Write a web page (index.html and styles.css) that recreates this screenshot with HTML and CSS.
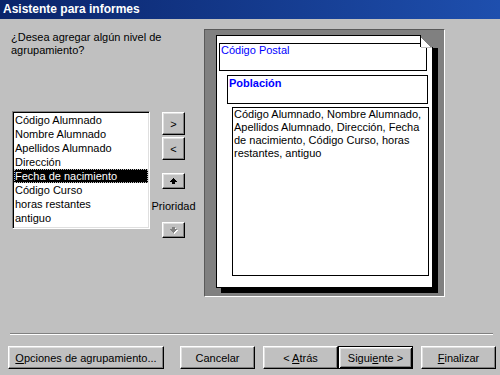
FILE: index.html
```html
<!DOCTYPE html>
<html lang="es">
<head>
  <meta charset="UTF-8">
  <title>Asistente para informes</title>
  <link rel="stylesheet" href="styles.css">
</head>
<body>

  <div class="wizard">
    <div class="titlebar">Asistente para informes</div>

    <div class="main">
      <div class="left">
        <p class="question">¿Desea agregar algún nivel de<br>agrupamiento?</p>

        <div class="picker">
          <ul class="listbox">
            <li>Código Alumnado</li>
            <li>Nombre Alumnado</li>
            <li>Apellidos Alumnado</li>
            <li>Dirección</li>
            <li class="selected">Fecha de nacimiento</li>
            <li>Código Curso</li>
            <li>horas restantes</li>
            <li>antiguo</li>
          </ul>

          <div class="move-buttons">
            <button class="btn small">&gt;</button>
            <button class="btn small">&lt;</button>
            <button class="btn arrow up">
              <svg width="7" height="6" viewBox="0 0 7 6" shape-rendering="crispEdges">
                <path d="M3 0h1v1h1v1h1v1h1v1H5v2H2V4H0V3h1V2h1V1h1z" fill="#000"/>
              </svg>
            </button>
            <span class="priority">Prioridad</span>
            <button class="btn arrow down" disabled>
              <svg width="8" height="7" viewBox="0 0 8 7" shape-rendering="crispEdges">
                <path transform="translate(1 1)" d="M2 0h3v2h2v1H6v1H5v1H4v1H3V5H2V4H1V3H0V2h2z" fill="#fff"/>
                <path d="M2 0h3v2h2v1H6v1H5v1H4v1H3V5H2V4H1V3H0V2h2z" fill="#808080"/>
              </svg>
            </button>
          </div>
        </div>
      </div>

      <!-- Vista previa del informe -->
      <div class="preview">
        <div class="page">
          <svg class="fold" width="19" height="13" viewBox="0 0 19 13" shape-rendering="crispEdges">
            <rect x="0" y="0" width="19" height="13" fill="#808080"/>
            <polygon points="0,0 13,13 0,13" fill="#fff"/>
            <rect x="0" y="0" width="1" height="12" fill="#000"/>
            <line x1="0" y1="0.5" x2="12.5" y2="13" stroke="#000" shape-rendering="auto"/>
            <rect x="1" y="12" width="11" height="1" fill="#c0c0c0"/>
            <rect x="12" y="12" width="1" height="1" fill="#000"/>
          </svg>
          <div class="group-box postal">Código Postal</div>
          <div class="group-box poblacion">Población</div>
          <div class="detail-box">Código Alumnado, Nombre Alumnado,<br>Apellidos Alumnado, Dirección, Fecha<br>de nacimiento, Código Curso, horas<br>restantes, antiguo</div>
        </div>
      </div>
    </div>

    <div class="separator"></div>

    <div class="footer">
      <button class="btn wide"><u>O</u>pciones de agrupamiento...</button>
      <button class="btn cancel">Cancelar</button>
      <button class="btn back">&lt; <u>A</u>trás</button>
      <button class="btn next default">Sigui<u>e</u>nte &gt;</button>
      <button class="btn finish"><u>F</u>inalizar</button>
    </div>
  </div>

</body>
</html>
```

FILE: styles.css
```css
* {
  box-sizing: border-box;
}

html,
body {
  margin: 0;
}

body {
  width: 500px;
  height: 375px;
  overflow: hidden;
  background-color: #c0c0c0;
  font-family: "Liberation Sans", Arial, sans-serif;
  font-size: 11px;
  color: #000;
}

.titlebar {
  height: 19px;
  line-height: 19px;
  padding-left: 3px;
  color: #fff;
  font-size: 12px;
  font-weight: bold;
  background: linear-gradient(to right, #0a246a, #1e4fae);
}

.main {
  display: flex;
  height: 314px;
  padding-top: 10px;
}

.left {
  width: 204px;
  padding-left: 11px;
}

.question {
  margin: 2px 0 0;
  line-height: 13px;
}

.picker {
  display: flex;
  gap: 12px;
  margin-top: 54px;
  margin-left: 1px;
}

/* Lista de campos */
.listbox {
  list-style: none;
  margin: 0;
  padding: 1px;
  width: 138px;
  height: 118px;
  background-color: #fff;
  border: 1px solid;
  border-color: #808080 #fff #fff #808080;
  box-shadow: inset 1px 1px #000, inset -1px -1px #dfdfdf;
}

.listbox li {
  height: 14px;
  line-height: 14px;
  padding-left: 1px;
  white-space: nowrap;
}

.listbox li.selected {
  background-color: #000;
  color: #fff;
  outline: 1px dotted #c0c0c0;
  outline-offset: -1px;
}

/* Botones estilo clásico */
.btn {
  font-family: inherit;
  font-size: 11px;
  color: #000;
  background-color: #c0c0c0;
  padding: 0;
  border: 1px solid;
  border-color: #fff #000 #000 #fff;
  box-shadow: inset -1px -1px #808080, inset 1px 1px #dfdfdf;
  border-radius: 0;
  cursor: pointer;
}

.btn u {
  text-decoration: underline;
  text-underline-offset: 1px;
}

.move-buttons {
  display: flex;
  flex-direction: column;
  align-items: center;
  width: 23px;
  margin-top: 1px;
}

.btn.small {
  width: 23px;
  height: 23px;
  line-height: 20px;
}

.btn.small + .btn.small {
  margin-top: 2px;
}

.btn.arrow {
  width: 23px;
  height: 16px;
  display: flex;
  align-items: center;
  justify-content: center;
}

.btn.up {
  margin-top: 13px;
}

.btn.up svg {
  margin-top: -1px;
}

.btn.down {
  margin-top: 9px;
}

.btn.down svg {
  margin-left: 1px;
}

.priority {
  margin-top: 11px;
  line-height: 13px;
  white-space: nowrap;
}

/* Vista previa */
.preview {
  width: 241px;
  height: 268px;
  padding: 5px 0 0 11px;
  background-color: #808080;
  border: 1px solid;
  border-color: #5a5a5a #fff #fff #5a5a5a;
}

.page {
  position: relative;
  width: 217px;
  height: 253px;
  background-color: #fff;
  border: 1px solid #000;
  box-shadow: 5px 5px 0 #000;
}

.fold {
  position: absolute;
  top: -1px;
  right: -7px;
  display: block;
}

.group-box,
.detail-box {
  border: 1px solid #000;
  line-height: 13px;
  padding: 0 1px;
  white-space: nowrap;
}

.group-box {
  color: #0000ff;
}

.postal {
  width: 208px;
  height: 28px;
  margin: 7px 0 0 2px;
}

.poblacion {
  width: 201px;
  height: 29px;
  margin: 4px 0 0 10px;
  padding-top: 1px;
  font-weight: bold;
}

.detail-box {
  width: 197px;
  height: 169px;
  margin: 3px 0 0 15px;
}

/* Pie */
.separator {
  margin: 0 7px 0 10px;
  border-top: 1px solid #808080;
  border-bottom: 1px solid #fff;
}

.footer {
  display: flex;
  padding: 11px 0 0 8px;
}

.footer .btn {
  width: 75px;
  height: 23px;
}

.footer .btn.wide {
  width: 156px;
}

.footer .cancel {
  margin-left: 16px;
}

.footer .back {
  margin-left: 8px;
}

.footer .finish {
  margin-left: 8px;
}

.btn.default {
  border: 1px solid #000;
  box-shadow: inset 1px 1px #fff, inset -1px -1px #000, inset 2px 2px #dfdfdf, inset -2px -2px #808080;
}
```
